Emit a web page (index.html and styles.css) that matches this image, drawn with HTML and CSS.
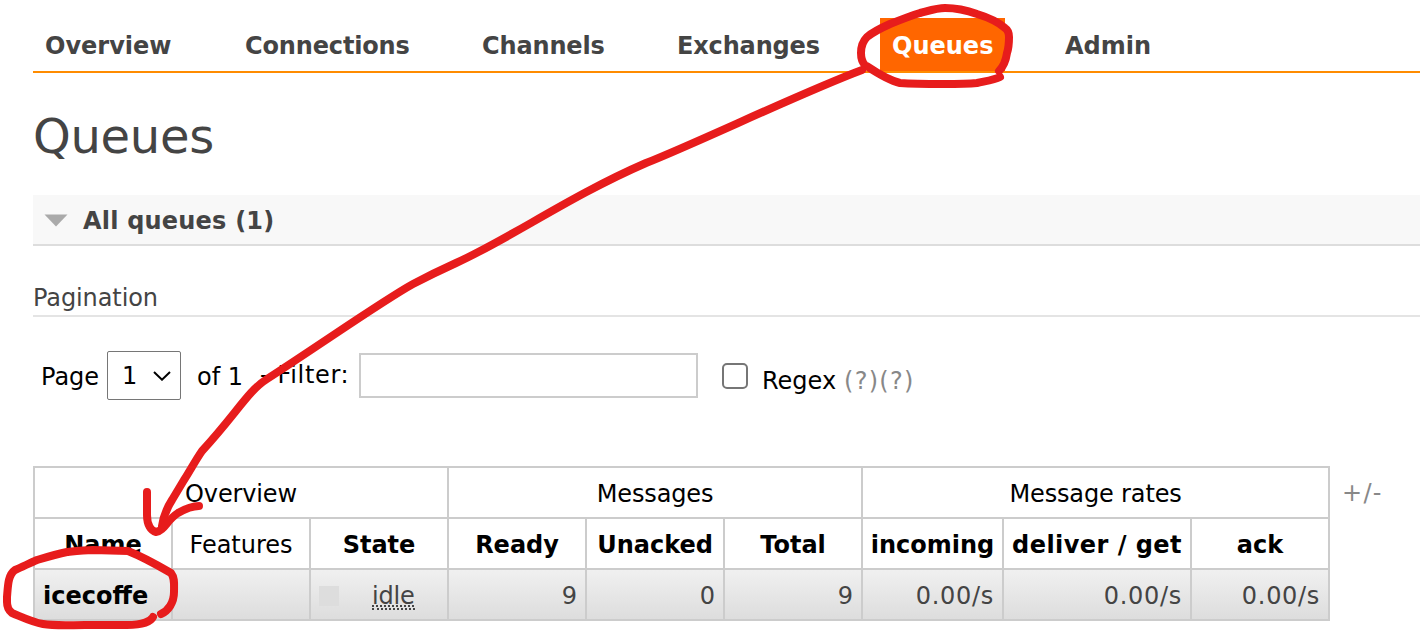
FILE: index.html
```
<!DOCTYPE html>
<html lang="en">
<head>
<meta charset="utf-8">
<title>Queues</title>
<link rel="stylesheet" href="styles.css">
</head>
<body>
<nav class="tabs">
  <a class="tab">Overview</a>
  <a class="tab tight">Connections</a>
  <a class="tab tight">Channels</a>
  <a class="tab tight">Exchanges</a>
  <a class="tab selected">Queues</a>
  <a class="tab">Admin</a>
</nav>
<main>
  <h1 class="title">Queues</h1>
  <h2 class="section"><svg class="caret" width="24" height="14" viewBox="0 0 24 14"><path d="M0.5 0.5H23.5L12 12.5Z" fill="#aaa"/></svg>All queues (1)</h2>
  <h3 class="subhead">Pagination</h3>
  <div class="controls">
    <span class="page-label">Page</span>
    <span class="select">1<svg class="chevron" width="18" height="10" viewBox="0 0 18 10"><path d="M1 1L9 8.7L17 1" fill="none" stroke="#000" stroke-width="2"/></svg></span>
    <span class="of">of 1</span>
    <span class="filter-label">- Filter:</span>
    <input class="filter" type="text" aria-label="Filter">
    <span class="check"></span>
    <span class="regex">Regex</span>
    <span class="help">(?)(?)</span>
  </div>
  <div class="table-row">
    <table class="queues">
      <colgroup><col class="c1"><col class="c1"><col class="c1"><col class="c1"><col class="c1"><col class="c1"><col class="c2"><col class="c3"><col class="c1"></colgroup>
      <tr><th class="plain group" colspan="3">Overview</th><th class="plain group" colspan="3">Messages</th><th class="plain group" colspan="3">Message rates</th></tr>
      <tr><th>Name</th><th class="plain">Features</th><th>State</th><th>Ready</th><th>Unacked</th><th>Total</th><th>incoming</th><th class="wide">deliver / get</th><th>ack</th></tr>
      <tr class="data"><td class="name">icecoffe</td><td></td><td><div class="state"><i class="square"></i><span class="idle">idle</span></div></td><td>9</td><td>0</td><td>9</td><td class="rate">0.00/s</td><td class="rate">0.00/s</td><td class="rate">0.00/s</td></tr>
    </table>
    <span class="toggle">+/-</span>
  </div>
</main>
<svg class="ink" width="1420" height="640" viewBox="0 0 1420 640">
  <path d="M999 71C1004 66 1006 60 1007 53C1009 47 1009 42 1009 37C1009 33 1008 30 1005 28C998 22 987 17 977 14C966 10 956 8 945 8C937 8 928 11 920 13C910 16 900 20 890 24C881 28 873 32 867 37C862 42 861 47 861 53C861 58 862 62 865 65C874 71 887 80 900 83C914 84 928 84 943 84C955 84 967 84 977 83C986 81 994 80 1000 77"/>
  <path d="M862 70C803 92 699 142 646 163C570 196 511 238 456 263Q434 273 413 284C384 300 330 338 267 379C248 391 237 413 202 451C195 461 190 471 184 480L172 500C165 511 163 519 162 526"/>
  <path d="M147 492V515C147 525 151 531 156 532C164 531 167 520 178 513C185 509 191 506 199 506"/>
  <path d="M153 617C151 621 143 625 127 625H85C70 625 55 626 43 624C32 622 22 617 12 613C8 610 7 607 7 602V597C8 585 8 575 15 570C22 567 30 563 37 560C47 557 57 554 67 552C76 551 84 550 93 550L128 551C143 557 159 566 171 573C175 578 174 585 174 592C174 603 168 611 161 614"/>
</svg>
</body>
</html>
```
FILE: styles.css
```
* { box-sizing: border-box; }
body {
  margin: 0;
  width: 1420px;
  height: 640px;
  overflow: hidden;
  position: relative;
  background: #fff;
  color: #444;
  font: 24px/28px "DejaVu Sans", Verdana, sans-serif;
}
.tabs {
  display: grid;
  grid-template-columns: 200px 237px 195px 215px 173px auto;
  justify-items: start;
  margin-left: 33px;
  padding-top: 18px;
  border-bottom: 2px solid #ff8c00;
}
.tab {
  height: 53px;
  padding: 14px 12px 0;
  font-weight: bold;
}
.tight { letter-spacing: -0.15px; }
.selected { background: #f60; color: #fff; }
main { padding-left: 33px; }
.title {
  margin: 0;
  padding-top: 35px;
  height: 122px;
  font-size: 48px;
  line-height: 56px;
  font-weight: normal;
  letter-spacing: -0.3px;
}
.section {
  display: flex;
  align-items: center;
  margin: 0;
  height: 51px;
  padding: 2px 0 0 11px;
  background: #f8f8f8;
  border-bottom: 2px solid #ddd;
  font-size: 24px;
  letter-spacing: 0.2px;
}
.caret { margin-right: 15px; }
.subhead {
  margin: 38px 0 0;
  height: 33px;
  border-bottom: 2px solid #e4e4e4;
  font-size: 24px;
  font-weight: normal;
  letter-spacing: -0.1px;
}
.controls {
  display: flex;
  align-items: flex-start;
  padding: 34px 0 0 8px;
  height: 149px;
  color: #000;
  white-space: nowrap;
}
.page-label { width: 66px; padding-top: 12px; }
.select {
  display: flex;
  align-items: center;
  width: 74px;
  height: 49px;
  padding-left: 14px;
  border: 1px solid #767676;
  border-radius: 2px;
}
.chevron { margin-left: 16px; }
.of { width: 79px; padding: 12px 0 0 16px; }
.filter-label { width: 99px; padding-top: 10px; letter-spacing: 0.65px; }
.filter {
  width: 339px;
  height: 45px;
  margin-top: 2px;
  border: 2px solid #ccc;
}
.check {
  width: 26px;
  height: 26px;
  margin: 12px 14px 0 24px;
  border: 2px solid #767676;
  border-radius: 5px;
}
.regex { width: 82px; padding-top: 16px; }
.help { padding-top: 16px; color: #888; letter-spacing: 1.3px; }
.table-row { display: flex; align-items: flex-start; }
.queues {
  width: 1297px;
  table-layout: fixed;
  border-collapse: collapse;
  color: #000;
}
.c1 { width: 138px; }
.c2 { width: 141px; }
.c3 { width: 188px; }
.queues th, .queues td {
  height: 51px;
  padding: 2px 0 0;
  border: 2px solid #ccc;
  white-space: nowrap;
}
.queues .plain { font-weight: normal; }
.queues .group { letter-spacing: -0.15px; }
.queues .wide { letter-spacing: 0.45px; }
.data td {
  padding-right: 8px;
  background: linear-gradient(#f0f0f0, #ddd);
  color: #444;
  text-align: right;
}
.data .rate { letter-spacing: 0.7px; }
.data .name {
  padding: 2px 0 0 8px;
  color: #000;
  font-weight: bold;
  text-align: left;
}
.state { display: flex; align-items: center; padding-left: 8px; }
.square { width: 20px; height: 20px; background: #ddd; }
.idle {
  margin-left: 33px;
  height: 28px;
  letter-spacing: -0.2px;
  text-decoration: underline dotted 2px;
  text-underline-offset: 2px;
  border-bottom: 2px dotted #444;
}
.toggle { padding: 13px 0 0 12px; color: #888; letter-spacing: 1.3px; }
.ink {
  position: absolute;
  left: 0;
  top: 0;
  fill: none;
  stroke: #e71c1c;
  stroke-width: 8;
  stroke-linecap: round;
  stroke-linejoin: round;
}
```
